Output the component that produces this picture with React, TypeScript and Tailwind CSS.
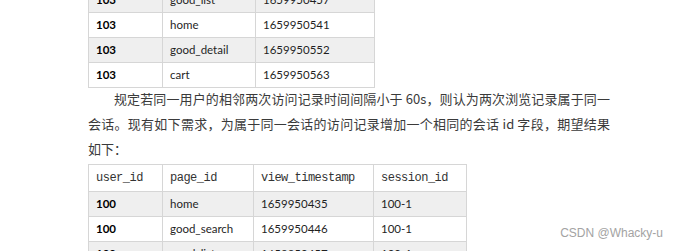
import React from 'react';

type Row = { user: string; page: string; ts: string; session?: string; shaded: boolean };

const topRows: Row[] = [
  { user: '103', page: 'good_list', ts: '1659950457', shaded: true },
  { user: '103', page: 'home', ts: '1659950541', shaded: false },
  { user: '103', page: 'good_detail', ts: '1659950552', shaded: true },
  { user: '103', page: 'cart', ts: '1659950563', shaded: false },
];

const resultRows: Row[] = [
  { user: '100', page: 'home', ts: '1659950435', session: '100-1', shaded: true },
  { user: '100', page: 'good_search', ts: '1659950446', session: '100-1', shaded: false },
  { user: '100', page: 'good_list', ts: '1659950457', session: '100-1', shaded: true },
];

const cell = 'border border-[#d6d6d6] pl-[7px] align-middle';
const bodyFont = "font-['Lato',sans-serif] text-[11.5px] text-[#1f1f1f]";
const headFont = "font-['Liberation_Mono',monospace] text-[12px] tracking-[-0.5px] text-[#333]";

function BodyRow({ row, withSession }: { row: Row; withSession?: boolean }) {
  return (
    <tr className={`h-[25px] ${row.shaded ? 'bg-[#efefef]' : 'bg-white'}`}>
      <td className={`${cell} font-bold text-black`}>{row.user}</td>
      <td className={cell}>{row.page}</td>
      <td className={cell}>{row.ts}</td>
      {withSession && <td className={cell}>{row.session}</td>}
    </tr>
  );
}

export default function App() {
  return (
    <div className="relative h-[251px] w-[676px] overflow-hidden bg-white">
      <div className="pl-[88px]">
        <table className={`mt-[-13px] table-fixed border-collapse ${bodyFont}`}>
          <colgroup>
            <col className="w-[74px]" />
            <col className="w-[93px]" />
            <col className="w-[119px]" />
          </colgroup>
          <tbody>
            {topRows.map((row, i) => (
              <BodyRow key={i} row={row} />
            ))}
          </tbody>
        </table>

        <div className="mt-[-2px] w-[522px] font-['Noto_Sans_CJK_SC',sans-serif] text-[13px] leading-[25px] text-[#3a3a3a]">
          <p className="pl-[26px] text-justify [text-align-last:justify]">
            规定若同一用户的相邻两次访问记录时间间隔小于 60s，则认为两次浏览记录属于同一
          </p>
          <p className="text-justify [text-align-last:justify]">
            会话。现有如下需求，为属于同一会话的访问记录增加一个相同的会话 id 字段，期望结果
          </p>
          <p>如下：</p>
        </div>

        <table className={`mt-[3px] table-fixed border-collapse ${bodyFont}`}>
          <colgroup>
            <col className="w-[74px]" />
            <col className="w-[91px]" />
            <col className="w-[120px]" />
            <col className="w-[93px]" />
          </colgroup>
          <thead>
            <tr className={`h-[27px] bg-white ${headFont}`}>
              <th className={`${cell} text-left font-normal`}>user_id</th>
              <th className={`${cell} text-left font-normal`}>page_id</th>
              <th className={`${cell} text-left font-normal`}>view_timestamp</th>
              <th className={`${cell} text-left font-normal`}>session_id</th>
            </tr>
          </thead>
          <tbody>
            {resultRows.map((row, i) => (
              <BodyRow key={i} row={row} withSession />
            ))}
          </tbody>
        </table>
      </div>

      <div className="absolute right-[13px] top-[225px] font-['Liberation_Sans',sans-serif] text-[12px] leading-[16px] text-[#a3a3a3]">
        CSDN @Whacky-u
      </div>
    </div>
  );
}
